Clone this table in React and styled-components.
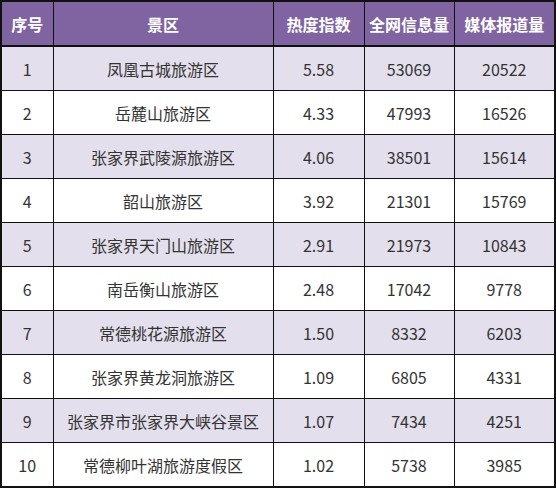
import styled, { createGlobalStyle } from "styled-components";

const rows = [
  ["1", "凤凰古城旅游区", "5.58", "53069", "20522"],
  ["2", "岳麓山旅游区", "4.33", "47993", "16526"],
  ["3", "张家界武陵源旅游区", "4.06", "38501", "15614"],
  ["4", "韶山旅游区", "3.92", "21301", "15769"],
  ["5", "张家界天门山旅游区", "2.91", "21973", "10843"],
  ["6", "南岳衡山旅游区", "2.48", "17042", "9778"],
  ["7", "常德桃花源旅游区", "1.50", "8332", "6203"],
  ["8", "张家界黄龙洞旅游区", "1.09", "6805", "4331"],
  ["9", "张家界市张家界大峡谷景区", "1.07", "7434", "4251"],
  ["10", "常德柳叶湖旅游度假区", "1.02", "5738", "3985"],
];

const headers = ["序号", "景区", "热度指数", "全网信息量", "媒体报道量"];
const widths = [52, 220, 91, 90, 101];

const GlobalStyle = createGlobalStyle`
  body {
    margin: 0;
    background: #fff;
    font-family: "Noto Sans CJK SC", "Noto Sans", sans-serif;
  }
`;

const Table = styled.table`
  border-collapse: collapse;
  table-layout: fixed;
  width: 554px;
  border: 2px solid #111;
`;

const HeadCell = styled.th`
  height: 43px;
  padding: 0;
  background: #8064a2;
  color: #fff;
  font-size: 16px;
  font-weight: 700;
  text-align: center;
  border: 1px solid #111;
  border-bottom-width: 2px;
`;

const Row = styled.tr`
  background: ${(p) => (p.$shade ? "#e4dfec" : "#fff")};
`;

const Cell = styled.td`
  height: 43px;
  padding: 0;
  color: #333;
  font-size: 16px;
  text-align: center;
  border: 1px solid #111;
`;

export default function App() {
  return (
    <>
      <GlobalStyle />
      <Table>
        <colgroup>
          {widths.map((w, i) => (
            <col key={i} style={{ width: w }} />
          ))}
        </colgroup>
        <thead>
          <tr>
            {headers.map((h) => (
              <HeadCell key={h}>{h}</HeadCell>
            ))}
          </tr>
        </thead>
        <tbody>
          {rows.map((r, i) => (
            <Row key={r[0]} $shade={i % 2 === 0}>
              {r.map((c, j) => (
                <Cell key={j}>{c}</Cell>
              ))}
            </Row>
          ))}
        </tbody>
      </Table>
    </>
  );
}
